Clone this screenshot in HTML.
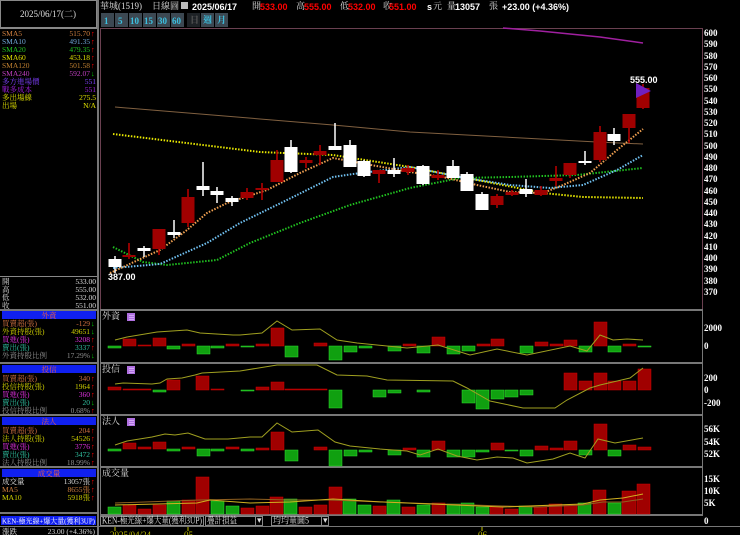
<!DOCTYPE html>
<html><head><meta charset="utf-8"><style>
html,body{margin:0;padding:0;background:#000;width:740px;height:535px;overflow:hidden}
svg{display:block}
text{font-family:"Liberation Serif","Noto Serif CJK TC",serif;font-size:9px}
.b{font-family:"Liberation Sans","Noto Sans CJK TC",sans-serif;font-weight:bold}
.ax{font-family:"Liberation Sans",sans-serif;font-weight:bold;font-size:9px;fill:#fff}
.lp text{font-size:7.5px}
</style></head><body>
<svg width="740" height="535" viewBox="0 0 740 535" xmlns="http://www.w3.org/2000/svg">
<rect width="740" height="535" fill="#000"/>
<!-- header -->
<text x="100" y="9" fill="#ddd" font-size="8.5">華城(1519)</text>
<text x="152" y="9" fill="#ddd" font-size="8">日線圖</text>
<rect x="181" y="2" width="7" height="7" fill="#bbb"/>
<text x="192" y="10" class="b" fill="#fff" font-size="11">2025/06/17</text>
<text x="252" y="9" fill="#ddd" font-size="8">開</text><text x="260" y="10" class="b" fill="#f00" font-size="10.5">533.00</text>
<text x="296" y="9" fill="#ddd" font-size="8">高</text><text x="304" y="10" class="b" fill="#f00" font-size="10.5">555.00</text>
<text x="340" y="9" fill="#ddd" font-size="8">低</text><text x="348" y="10" class="b" fill="#f00" font-size="10.5">532.00</text>
<text x="383" y="9" fill="#ddd" font-size="8">收</text><text x="389" y="10" class="b" fill="#f00" font-size="10.5">551.00</text>
<text x="427" y="10" class="b" fill="#fff">s</text><text x="433" y="9" fill="#ddd" font-size="8">元</text>
<text x="447" y="9" fill="#ddd" font-size="8">量</text><text x="455" y="10" class="b" fill="#fff" font-size="10">13057</text>
<text x="489" y="9" fill="#ddd" font-size="8">張</text>
<text x="502" y="10" class="b" fill="#fff" font-size="10">+23.00 (+4.36%)</text>
<!-- buttons -->
<g class="b" font-size="10">
<rect x="101" y="13" width="13" height="14" fill="#3c4852"/><text x="104" y="24" fill="#3cc0e0">1</text>
<rect x="115" y="13" width="13" height="14" fill="#3c4852"/><text x="118" y="24" fill="#3cc0e0">5</text>
<rect x="129" y="13" width="13" height="14" fill="#3c4852"/><text x="130" y="24" fill="#3cc0e0">10</text>
<rect x="143" y="13" width="13" height="14" fill="#3c4852"/><text x="144" y="24" fill="#3cc0e0">15</text>
<rect x="157" y="13" width="13" height="14" fill="#3c4852"/><text x="158" y="24" fill="#3cc0e0">30</text>
<rect x="171" y="13" width="13" height="14" fill="#3c4852"/><text x="172" y="24" fill="#3cc0e0">60</text>
<rect x="187" y="13" width="13" height="14" fill="#1e2226"/><text x="190" y="23" fill="#555" font-size="8">日</text>
<rect x="201" y="13" width="13" height="14" fill="#3c4852"/><text x="203" y="23" fill="#3cc0e0" font-size="8">週</text>
<rect x="215" y="13" width="13" height="14" fill="#3c4852"/><text x="217" y="23" fill="#3cc0e0" font-size="8">月</text>
</g>
<!-- left panel frame -->
<rect x="0.5" y="0.5" width="96" height="27" fill="none" stroke="#888"/>
<text x="48" y="17" fill="#ddd" text-anchor="middle" font-size="8">2025/06/17(二)</text>
<rect x="97" y="0" width="2" height="535" fill="#777"/>
<line x1="0" y1="28.5" x2="97" y2="28.5" stroke="#888"/>
<g class="lp">
<text x="2" y="36" fill="#d08040">SMA5</text><text x="90" y="36" fill="#d08040" text-anchor="end">515.70</text><text x="91" y="36" fill="#f00">↑</text>
<text x="2" y="44" fill="#70a8d8">SMA10</text><text x="90" y="44" fill="#70a8d8" text-anchor="end">491.35</text><text x="91" y="44" fill="#f00">↑</text>
<text x="2" y="52" fill="#20c020">SMA20</text><text x="90" y="52" fill="#20c020" text-anchor="end">479.35</text><text x="91" y="52" fill="#f00">↑</text>
<text x="2" y="60" fill="#e0e000">SMA60</text><text x="90" y="60" fill="#e0e000" text-anchor="end">453.18</text><text x="91" y="60" fill="#f00">↑</text>
<text x="2" y="68" fill="#c08030">SMA120</text><text x="90" y="68" fill="#c08030" text-anchor="end">501.58</text><text x="91" y="68" fill="#f00">↑</text>
<text x="2" y="76" fill="#c040c0">SMA240</text><text x="90" y="76" fill="#c040c0" text-anchor="end">592.07</text><text x="91" y="76" fill="#0c0">↓</text>
<text x="2" y="84" fill="#8040ff">多方進場價</text><text x="96" y="84" fill="#8040ff" text-anchor="end">551</text>
<text x="2" y="92" fill="#a020e0">戰多成本</text><text x="96" y="92" fill="#a020e0" text-anchor="end">551</text>
<text x="2" y="100" fill="#e0e000">多出場線</text><text x="96" y="100" fill="#e0e000" text-anchor="end">275.5</text>
<text x="2" y="108" fill="#e0e000">出場</text><text x="96" y="108" fill="#e0e000" text-anchor="end">N/A</text>
</g>
<line x1="0" y1="276.5" x2="97" y2="276.5" stroke="#888"/>
<g class="lp" fill="#ddd">
<text x="2" y="284">開</text><text x="96" y="284" text-anchor="end">533.00</text>
<text x="2" y="292">高</text><text x="96" y="292" text-anchor="end">555.00</text>
<text x="2" y="300">低</text><text x="96" y="300" text-anchor="end">532.00</text>
<text x="2" y="308">收</text><text x="96" y="308" text-anchor="end">551.00</text>
</g>
<g fill="#777"><rect x="0" y="309" width="97" height="2"/><rect x="0" y="362" width="97" height="2"/><rect x="0" y="414" width="97" height="2"/><rect x="0" y="466" width="97" height="2"/><rect x="0" y="512" width="97" height="2"/><rect x="0" y="526" width="740" height="1"/></g>
<g class="lp">
<rect x="2" y="311" width="94" height="8" fill="#1020f0"/><text x="49" y="318" fill="#f06040" text-anchor="middle">外資</text>
<text x="2" y="326" fill="#d07040">買賣超(張)</text><text x="90" y="326" fill="#d07040" text-anchor="end">-129</text><text x="91" y="326" fill="#0c0">↓</text>
<text x="2" y="334" fill="#d0d000">外資持股(張)</text><text x="90" y="334" fill="#d0d000" text-anchor="end">49651</text><text x="91" y="334" fill="#0c0">↓</text>
<text x="2" y="342" fill="#e030e0">買進(張)</text><text x="90" y="342" fill="#e030e0" text-anchor="end">3208</text><text x="91" y="342" fill="#f00">↑</text>
<text x="2" y="350" fill="#30c0a0">賣出(張)</text><text x="90" y="350" fill="#30c0a0" text-anchor="end">3337</text><text x="91" y="350" fill="#f00">↑</text>
<text x="2" y="358" fill="#909090">外資持股比例</text><text x="90" y="358" fill="#909090" text-anchor="end">17.29%</text><text x="91" y="358" fill="#0c0">↓</text>
<rect x="2" y="365" width="94" height="8" fill="#1020f0"/><text x="49" y="372" fill="#f06040" text-anchor="middle">投信</text>
<text x="2" y="381" fill="#d07040">買賣超(張)</text><text x="90" y="381" fill="#d07040" text-anchor="end">340</text><text x="91" y="381" fill="#f00">↑</text>
<text x="2" y="389" fill="#d0d000">投信持股(張)</text><text x="90" y="389" fill="#d0d000" text-anchor="end">1964</text><text x="91" y="389" fill="#f00">↑</text>
<text x="2" y="397" fill="#e030e0">買進(張)</text><text x="90" y="397" fill="#e030e0" text-anchor="end">360</text><text x="91" y="397" fill="#f00">↑</text>
<text x="2" y="405" fill="#30c0a0">賣出(張)</text><text x="90" y="405" fill="#30c0a0" text-anchor="end">20</text><text x="91" y="405" fill="#0c0">↓</text>
<text x="2" y="413" fill="#909090">投信持股比例</text><text x="90" y="413" fill="#909090" text-anchor="end">0.68%</text><text x="91" y="413" fill="#f00">↑</text>
<rect x="2" y="417" width="94" height="8" fill="#1020f0"/><text x="49" y="424" fill="#f06040" text-anchor="middle">法人</text>
<text x="2" y="433" fill="#d07040">買賣超(張)</text><text x="90" y="433" fill="#d07040" text-anchor="end">204</text><text x="91" y="433" fill="#f00">↑</text>
<text x="2" y="441" fill="#d0d000">法人持股(張)</text><text x="90" y="441" fill="#d0d000" text-anchor="end">54526</text><text x="91" y="441" fill="#f00">↑</text>
<text x="2" y="449" fill="#e030e0">買進(張)</text><text x="90" y="449" fill="#e030e0" text-anchor="end">3776</text><text x="91" y="449" fill="#f00">↑</text>
<text x="2" y="457" fill="#30c0a0">賣出(張)</text><text x="90" y="457" fill="#30c0a0" text-anchor="end">3472</text><text x="91" y="457" fill="#f00">↑</text>
<text x="2" y="465" fill="#909090">法人持股比例</text><text x="90" y="465" fill="#909090" text-anchor="end">18.99%</text><text x="91" y="465" fill="#f00">↑</text>
<rect x="2" y="469" width="94" height="8" fill="#1020f0"/><text x="49" y="476" fill="#f06040" text-anchor="middle">成交量</text>
<text x="2" y="484" fill="#ddd">成交量</text><text x="90" y="484" fill="#ddd" text-anchor="end">13057張</text><text x="91" y="484" fill="#f00">↑</text>
<text x="2" y="492" fill="#d08040">MA5</text><text x="90" y="492" fill="#d08040" text-anchor="end">8655張</text><text x="91" y="492" fill="#f00">↑</text>
<text x="2" y="500" fill="#d0d000">MA10</text><text x="90" y="500" fill="#d0d000" text-anchor="end">5918張</text><text x="91" y="500" fill="#f00">↑</text>
<rect x="1" y="516" width="95" height="9" fill="#1020f0"/><text x="2" y="523.5" fill="#fff" textLength="93" lengthAdjust="spacingAndGlyphs">KEN-極光線+爆大量(獲利3UP)</text>
<text x="2" y="534" fill="#ddd">漲跌</text><text x="95" y="534" fill="#ddd" text-anchor="end">23.00 (+4.36%)</text>
</g>
<!-- main frame -->
<rect x="100.5" y="28.5" width="602" height="281" fill="none" stroke="#6a4050"/>
<!-- price axis -->
<g class="ax">
<text x="704" y="36">600</text><text x="704" y="47">590</text><text x="704" y="59">580</text><text x="704" y="70">570</text><text x="704" y="81">560</text><text x="704" y="92">550</text><text x="704" y="104">540</text><text x="704" y="115">530</text><text x="704" y="126">520</text><text x="704" y="137">510</text><text x="704" y="149">500</text><text x="704" y="160">490</text><text x="704" y="171">480</text><text x="704" y="182">470</text><text x="704" y="194">460</text><text x="704" y="205">450</text><text x="704" y="216">440</text><text x="704" y="227">430</text><text x="704" y="239">420</text><text x="704" y="250">410</text><text x="704" y="261">400</text><text x="704" y="272">390</text><text x="704" y="284">380</text><text x="704" y="295">370</text>
</g>
<!-- MA lines -->
<polyline fill="none" stroke="#a020a0" stroke-width="1.5" points="503,28 540,31 600,37 643,43"/>
<polyline fill="none" stroke="#806040" stroke-width="1" points="115,107 333,125 410,132 597,142 643,144"/>
<g fill="none" stroke-width="2" stroke-dasharray="1.5,1.5">
<polyline stroke="#e8e800" points="113,134 260,152 333,155 410,167 477,180 543,193 583,197 643,198"/>
<polyline stroke="#20c020" points="113,247 143,262 167,265 217,260 250,243 300,223 350,205 410,188 460,178 510,177 577,175 643,168"/>
<polyline stroke="#70c0f0" points="113,268 160,264 207,243 240,223 287,200 333,177 353,174 410,167 460,177 510,185 550,188 583,185 617,170 643,155"/>
<polyline stroke="#f0a050" points="110,273 160,250 187,230 207,213 227,203 267,190 300,173 333,158 360,163 410,172 443,177 477,185 510,192 543,193 563,185 590,173 617,150 643,129"/>
</g>
<!-- candles -->
<g stroke-width="1.5">
<g stroke="#fff" fill="#fff">
<line x1="115" y1="256" x2="115" y2="273"/><rect x="108.5" y="259" width="13" height="8" stroke="none"/>
<line x1="144" y1="246" x2="144" y2="257"/><rect x="137.5" y="248" width="13" height="3" stroke="none"/>
<line x1="174" y1="220" x2="174" y2="238"/><rect x="167.5" y="232" width="13" height="3" stroke="none"/>
<line x1="203" y1="162" x2="203" y2="196"/><rect x="196.5" y="186" width="13" height="4" stroke="none"/>
<line x1="217" y1="187" x2="217" y2="203"/><rect x="210.5" y="191" width="13" height="4" stroke="none"/>
<line x1="232" y1="196" x2="232" y2="206"/><rect x="225.5" y="198" width="13" height="4" stroke="none"/>
<line x1="291" y1="140" x2="291" y2="173"/><rect x="284.5" y="147" width="13" height="25" stroke="none"/>
<line x1="335" y1="123" x2="335" y2="150"/><rect x="328.5" y="146" width="13" height="4" stroke="none"/>
<line x1="350" y1="140" x2="350" y2="167"/><rect x="343.5" y="145" width="13" height="22" stroke="none"/>
<line x1="364" y1="160" x2="364" y2="177"/><rect x="357.5" y="161" width="13" height="15" stroke="none"/>
<line x1="394" y1="158" x2="394" y2="177"/><rect x="387.5" y="170" width="13" height="4" stroke="none"/>
<line x1="423" y1="165" x2="423" y2="185"/><rect x="416.5" y="166" width="13" height="18" stroke="none"/>
<line x1="453" y1="160" x2="453" y2="178"/><rect x="446.5" y="166" width="13" height="12" stroke="none"/>
<line x1="467" y1="172" x2="467" y2="191"/><rect x="460.5" y="174" width="13" height="17" stroke="none"/>
<line x1="482" y1="192" x2="482" y2="210"/><rect x="475.5" y="194" width="13" height="16" stroke="none"/>
<line x1="526" y1="179" x2="526" y2="197"/><rect x="519.5" y="189" width="13" height="5" stroke="none"/>
<line x1="585" y1="151" x2="585" y2="165"/><rect x="578.5" y="161" width="13" height="2" stroke="none"/>
<line x1="614" y1="128" x2="614" y2="145"/><rect x="607.5" y="134" width="13" height="7" stroke="none"/>
</g>
<g stroke="#c00000" fill="#a00000">
<line x1="129" y1="243" x2="129" y2="259"/><rect x="122.5" y="255" width="13" height="2" stroke="none"/>
<line x1="159" y1="229" x2="159" y2="255"/><rect x="152.5" y="229" width="13" height="20" stroke="none"/>
<line x1="188" y1="189" x2="188" y2="227"/><rect x="181.5" y="197" width="13" height="26" stroke="none"/>
<line x1="247" y1="188" x2="247" y2="200"/><rect x="240.5" y="192" width="13" height="6" stroke="none"/>
<line x1="262" y1="183" x2="262" y2="200"/><rect x="255.5" y="188" width="13" height="2" stroke="none"/>
<line x1="277" y1="150" x2="277" y2="182"/><rect x="270.5" y="160" width="13" height="22" stroke="none"/>
<line x1="306" y1="157" x2="306" y2="168"/><rect x="299.5" y="160" width="13" height="3" stroke="none"/>
<line x1="320" y1="145" x2="320" y2="165"/><rect x="313.5" y="151" width="13" height="4" stroke="none"/>
<line x1="379" y1="170" x2="379" y2="183"/><rect x="372.5" y="170" width="13" height="4" stroke="none"/>
<line x1="408" y1="165" x2="408" y2="175"/><rect x="401.5" y="168" width="13" height="4" stroke="none"/>
<line x1="438" y1="170" x2="438" y2="180"/><rect x="431.5" y="175" width="13" height="3" stroke="none"/>
<line x1="497" y1="194" x2="497" y2="208"/><rect x="490.5" y="196" width="13" height="9" stroke="none"/>
<line x1="512" y1="190" x2="512" y2="196"/><rect x="505.5" y="192" width="13" height="3" stroke="none"/>
<line x1="541" y1="186" x2="541" y2="196"/><rect x="534.5" y="190" width="13" height="5" stroke="none"/>
<line x1="556" y1="166" x2="556" y2="186"/><rect x="549.5" y="178" width="13" height="3" stroke="none"/>
<line x1="570" y1="163" x2="570" y2="178"/><rect x="563.5" y="163" width="13" height="12" stroke="none"/>
<line x1="600" y1="126" x2="600" y2="162"/><rect x="593.5" y="132" width="13" height="28" stroke="none"/>
<line x1="629" y1="114" x2="629" y2="143"/><rect x="622.5" y="114" width="13" height="14" stroke="none"/>
<line x1="643" y1="84" x2="643" y2="109"/><rect x="636.5" y="88" width="13" height="20" stroke="none"/>
</g>
</g>
<polygon points="636,83 651,91 636,98" fill="#7020c0"/>
<text x="630" y="83" class="b" fill="#fff" font-size="9.5">555.00</text>
<text x="108" y="280" class="b" fill="#fff" font-size="9.5">387.00</text>
<!-- sub panels frames -->
<g fill="#777">
<rect x="100" y="309" width="603" height="2"/><rect x="100" y="362" width="603" height="2"/><rect x="100" y="414" width="603" height="2"/><rect x="100" y="466" width="603" height="2"/><rect x="100" y="514" width="603" height="2"/>
<rect x="702" y="309" width="1" height="218"/><rect x="100" y="309" width="1" height="218"/>
</g>
<g font-size="8" fill="#ddd"><text x="102" y="319" font-size="8">外資</text><text x="102" y="372" font-size="8">投信</text><text x="102" y="424" font-size="8">法人</text><text x="102" y="476" font-size="8">成交量</text></g>
<g fill="#b070e0"><rect x="127" y="313" width="8" height="8"/><rect x="127" y="366" width="8" height="8"/><rect x="127" y="418" width="8" height="8"/></g>
<g stroke="#e0c0ff" stroke-width="0.7"><line x1="129" y1="315.5" x2="134" y2="315.5"/><line x1="129" y1="317.5" x2="134" y2="317.5"/><line x1="129" y1="319.5" x2="134" y2="319.5"/><line x1="129" y1="368.5" x2="134" y2="368.5"/><line x1="129" y1="370.5" x2="134" y2="370.5"/><line x1="129" y1="372.5" x2="134" y2="372.5"/><line x1="129" y1="420.5" x2="134" y2="420.5"/><line x1="129" y1="422.5" x2="134" y2="422.5"/><line x1="129" y1="424.5" x2="134" y2="424.5"/></g>
<g class="ax"><text x="704" y="331">2000</text><text x="704" y="349">0</text><text x="704" y="381">200</text><text x="704" y="393">0</text><text x="704" y="406">-200</text><text x="704" y="432">56K</text><text x="704" y="445">54K</text><text x="704" y="457">52K</text><text x="704" y="482">15K</text><text x="704" y="494">10K</text><text x="704" y="506">5K</text><text x="704" y="524">0</text></g>
<!-- panel1 bars -->
<g fill="#a00000" stroke="#d00000" stroke-width="0.5">
<rect x="123" y="339" width="13" height="7"/><rect x="138" y="345" width="13" height="1"/><rect x="153" y="338" width="13" height="8"/><rect x="182" y="344" width="13" height="2"/><rect x="226" y="344" width="13" height="2"/>
<rect x="256" y="344" width="13" height="2"/><rect x="271" y="328" width="13" height="18"/><rect x="314" y="343" width="13" height="3"/><rect x="403" y="344" width="13" height="2"/><rect x="432" y="337" width="13" height="9"/><rect x="477" y="344" width="13" height="2"/><rect x="491" y="339" width="13" height="7"/><rect x="535" y="342" width="13" height="4"/><rect x="550" y="344" width="13" height="2"/><rect x="564" y="340" width="13" height="6"/><rect x="594" y="322" width="13" height="24"/><rect x="623" y="344" width="13" height="2"/>
</g>
<g fill="#10a010" stroke="#30e030" stroke-width="0.5">
<rect x="108" y="346" width="13" height="2"/><rect x="167" y="346" width="13" height="3"/><rect x="197" y="346" width="13" height="8"/><rect x="211" y="346" width="13" height="2"/><rect x="241" y="346" width="13" height="1"/>
<rect x="285" y="346" width="13" height="11"/><rect x="329" y="346" width="13" height="14"/><rect x="344" y="346" width="13" height="6"/><rect x="359" y="346" width="13" height="2"/><rect x="388" y="346" width="13" height="5"/><rect x="417" y="346" width="13" height="7"/><rect x="447" y="346" width="13" height="8"/><rect x="462" y="346" width="13" height="5"/><rect x="520" y="346" width="13" height="7"/><rect x="579" y="346" width="13" height="6"/><rect x="608" y="346" width="13" height="6"/><rect x="638" y="346" width="13" height="1"/>
</g>
<polyline fill="none" stroke="#a0a020" stroke-width="1" points="115,340 127,337 157,332 187,330 200,333 233,335 240,335 262,333 277,321 292,330 320,329 337,340 357,343 387,346 407,348 438,345 470,355 497,349 527,355 570,346 587,351 600,335 613,340 627,339 643,340"/>
<!-- panel2 bars -->
<g fill="#a00000" stroke="#d00000" stroke-width="0.5">
<rect x="108" y="387" width="13" height="3"/><rect x="123" y="389" width="28" height="1"/><rect x="167" y="380" width="13" height="10"/><rect x="196" y="376" width="13" height="14"/><rect x="211" y="389" width="13" height="1"/>
<rect x="256" y="387" width="13" height="3"/><rect x="271" y="382" width="13" height="8"/><rect x="285" y="389" width="42" height="1"/><rect x="564" y="373" width="13" height="17"/><rect x="579" y="381" width="13" height="9"/><rect x="594" y="373" width="13" height="17"/><rect x="608" y="381" width="13" height="9"/><rect x="623" y="381" width="13" height="9"/><rect x="638" y="369" width="13" height="21"/>
</g>
<g fill="#10a010" stroke="#30e030" stroke-width="0.5">
<rect x="153" y="390" width="13" height="2"/><rect x="241" y="390" width="13" height="1"/><rect x="329" y="390" width="13" height="18"/><rect x="373" y="390" width="13" height="7"/><rect x="388" y="390" width="13" height="3"/><rect x="417" y="390" width="13" height="2"/><rect x="462" y="390" width="13" height="13"/><rect x="476" y="390" width="13" height="19"/><rect x="491" y="390" width="13" height="9"/><rect x="505" y="390" width="13" height="7"/><rect x="520" y="390" width="13" height="5"/>
</g>
<polyline fill="none" stroke="#a0a020" stroke-width="1" points="115,384 123,383 152,384 160,383 167,379 182,378 195,375 202,373 240,371 277,365 317,365 337,375 367,376 387,380 453,381 467,388 490,401 523,408 555,408 567,400 590,388 600,385 630,378 643,368"/>
<!-- panel3 bars -->
<g fill="#a00000" stroke="#d00000" stroke-width="0.5">
<rect x="123" y="443" width="13" height="6"/><rect x="138" y="447" width="13" height="2"/><rect x="153" y="442" width="13" height="7"/><rect x="182" y="447" width="13" height="2"/><rect x="226" y="447" width="13" height="2"/>
<rect x="256" y="448" width="13" height="2"/><rect x="271" y="432" width="13" height="18"/><rect x="314" y="447" width="13" height="3"/><rect x="403" y="448" width="13" height="2"/><rect x="432" y="441" width="13" height="9"/><rect x="491" y="443" width="13" height="7"/><rect x="535" y="446" width="13" height="4"/><rect x="550" y="448" width="13" height="2"/><rect x="564" y="441" width="13" height="9"/><rect x="594" y="424" width="13" height="26"/><rect x="623" y="445" width="13" height="5"/><rect x="638" y="447" width="13" height="3"/>
</g>
<g fill="#10a010" stroke="#30e030" stroke-width="0.5">
<rect x="108" y="449" width="13" height="2"/><rect x="167" y="449" width="13" height="2"/><rect x="197" y="449" width="13" height="7"/><rect x="211" y="449" width="13" height="2"/><rect x="241" y="449" width="13" height="2"/>
<rect x="285" y="450" width="13" height="11"/><rect x="329" y="450" width="13" height="16"/><rect x="344" y="450" width="13" height="6"/><rect x="359" y="450" width="13" height="2"/><rect x="388" y="450" width="13" height="5"/><rect x="417" y="450" width="13" height="7"/><rect x="447" y="450" width="13" height="7"/><rect x="462" y="450" width="13" height="7"/><rect x="476" y="450" width="13" height="2"/><rect x="505" y="450" width="13" height="1"/><rect x="520" y="450" width="13" height="6"/><rect x="579" y="450" width="13" height="5"/><rect x="608" y="450" width="13" height="6"/>
</g>
<polyline fill="none" stroke="#a0a020" stroke-width="1" points="115,445 127,441 152,437 165,434 175,435 188,433 205,439 228,439 250,437 262,437 277,423 292,432 318,430 335,442 350,446 380,449 407,451 420,455 438,449 457,456 477,460 497,457 513,458 527,463 553,459 570,453 585,458 598,439 615,443 643,438"/>
<!-- volume bars -->
<g fill="#a00000" stroke="#d00000" stroke-width="0.5">
<rect x="123" y="505" width="13" height="9"/><rect x="138" y="509" width="13" height="5"/><rect x="153" y="505" width="13" height="9"/><rect x="182" y="500" width="13" height="14"/><rect x="196" y="477" width="13" height="37"/><rect x="241" y="508" width="13" height="6"/>
<rect x="256" y="506" width="13" height="8"/><rect x="270" y="497" width="13" height="17"/><rect x="299" y="507" width="13" height="7"/><rect x="314" y="505" width="13" height="9"/><rect x="329" y="487" width="13" height="27"/><rect x="373" y="506" width="13" height="8"/><rect x="402" y="507" width="13" height="7"/><rect x="432" y="503" width="13" height="11"/><rect x="490" y="507" width="13" height="7"/><rect x="505" y="509" width="13" height="5"/><rect x="534" y="507" width="13" height="7"/><rect x="549" y="504" width="13" height="10"/><rect x="564" y="505" width="13" height="9"/><rect x="593" y="490" width="13" height="24"/><rect x="622" y="491" width="14" height="23"/><rect x="637" y="484" width="13" height="30"/>
</g>
<g fill="#10a010" stroke="#30e030" stroke-width="0.5">
<rect x="108" y="507" width="13" height="7"/><rect x="167" y="501" width="13" height="13"/><rect x="211" y="501" width="13" height="13"/><rect x="226" y="506" width="13" height="8"/>
<rect x="284" y="499" width="13" height="15"/><rect x="343" y="499" width="13" height="15"/><rect x="358" y="505" width="13" height="9"/><rect x="387" y="500" width="13" height="14"/><rect x="417" y="505" width="13" height="9"/><rect x="447" y="504" width="13" height="10"/><rect x="461" y="503" width="13" height="11"/><rect x="476" y="507" width="13" height="7"/><rect x="519" y="506" width="13" height="8"/><rect x="578" y="503" width="13" height="11"/><rect x="608" y="503" width="13" height="11"/>
</g>
<polyline fill="none" stroke="#906020" stroke-width="1" points="115,503 200,500 250,499 290,500 330,500 410,503 503,506 537,507 583,505 603,502 623,502 643,499"/>
<polyline fill="none" stroke="#d0b020" stroke-width="1" points="115,505 197,503 210,500 250,503 290,502 333,499 383,502 503,507 583,504 600,500 623,498 643,494"/>
<!-- bottom row -->
<rect x="100" y="516" width="603" height="10" fill="#000"/>
<rect x="100.5" y="516.5" width="103" height="9" fill="none" stroke="#888"/>
<text x="102" y="523.5" fill="#ddd" font-size="7.5" textLength="100" lengthAdjust="spacingAndGlyphs">KEN-極光線+爆大量(獲利3UP)</text>
<rect x="205.5" y="516.5" width="50" height="9" fill="none" stroke="#888"/>
<text x="207" y="523.5" fill="#ddd" font-size="7.5" textLength="30" lengthAdjust="spacingAndGlyphs">疊計損益</text>
<rect x="255.5" y="516.5" width="7" height="9" fill="none" stroke="#888"/><text x="257" y="523" fill="#ddd" font-size="6">▾</text>
<rect x="271.5" y="516.5" width="50" height="9" fill="none" stroke="#888"/>
<text x="273" y="523.5" fill="#ddd" font-size="7.5" textLength="36" lengthAdjust="spacingAndGlyphs">均均量圖5</text>
<rect x="321.5" y="516.5" width="7" height="9" fill="none" stroke="#888"/><text x="323" y="523" fill="#ddd" font-size="6">▾</text>
<rect x="100" y="526" width="603" height="1" fill="#777"/>
<g stroke="#c0c000"><line x1="115" y1="527" x2="115" y2="531"/><line x1="188" y1="527" x2="188" y2="531"/><line x1="482" y1="527" x2="482" y2="531"/></g>
<text x="110" y="538" fill="#c0c000">2025/04/24</text>
<text x="184" y="538" fill="#c0c000">05</text>
<text x="478" y="538" fill="#c0c000">06</text>
</svg>
</body></html>
